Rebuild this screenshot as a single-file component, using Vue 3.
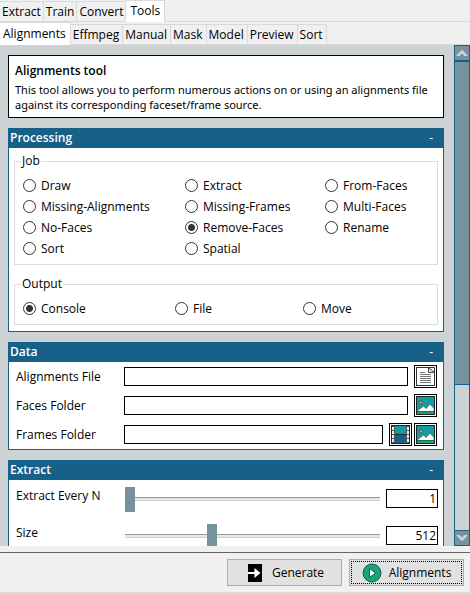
<script setup>
import { ref } from 'vue'

const mainTabs = ['Extract', 'Train', 'Convert', 'Tools']
const toolTabs = ['Alignments', 'Effmpeg', 'Manual', 'Mask', 'Model', 'Preview', 'Sort']
const activeMain = ref('Tools')
const activeTool = ref('Alignments')

const jobs = [
  'Draw', 'Extract', 'From-Faces',
  'Missing-Alignments', 'Missing-Frames', 'Multi-Faces',
  'No-Faces', 'Remove-Faces', 'Rename',
  'Sort', 'Spatial',
]
const outputs = ['Console', 'File', 'Move']
const job = ref('Remove-Faces')
const output = ref('Console')

const paths = ref([
  { id: 'alignments-file', label: 'Alignments File', value: '', pickers: ['file'] },
  { id: 'faces-folder', label: 'Faces Folder', value: '', pickers: ['picture'] },
  { id: 'frames-folder', label: 'Frames Folder', value: '', pickers: ['film', 'picture'] },
])

const sliders = ref([
  { id: 'extract-every-n', label: 'Extract Every N', value: 1, min: 1, max: 100 },
  { id: 'size', label: 'Size', value: 512, min: 256, max: 1024 },
])
</script>

<template>
  <div class="app">
    <nav class="tabs">
      <button
        v-for="tab in mainTabs"
        :key="tab"
        type="button"
        class="tab"
        :class="{ active: tab === activeMain }"
        @click="activeMain = tab"
      >{{ tab }}</button>
    </nav>
    <nav class="tabs tabs-tool">
      <button
        v-for="tab in toolTabs"
        :key="tab"
        type="button"
        class="tab"
        :class="{ active: tab === activeTool }"
        @click="activeTool = tab"
      >{{ tab }}</button>
    </nav>

    <div class="body">
      <main class="content">
        <section class="info">
          <h1>Alignments tool</h1>
          <p>This tool allows you to perform numerous actions on or using an alignments file against its corresponding faceset/frame source.</p>
        </section>

        <section class="panel">
          <header class="panel-head"><h2>Processing</h2><button type="button">-</button></header>
          <div class="groups">
            <fieldset>
              <legend>Job</legend>
              <div class="options job">
                <label v-for="name in jobs" :key="name">
                  <input v-model="job" type="radio" name="job" :value="name">{{ name }}
                </label>
              </div>
            </fieldset>
            <fieldset>
              <legend>Output</legend>
              <div class="options output">
                <label v-for="name in outputs" :key="name">
                  <input v-model="output" type="radio" name="output" :value="name">{{ name }}
                </label>
              </div>
            </fieldset>
          </div>
        </section>

        <section class="panel">
          <header class="panel-head"><h2>Data</h2><button type="button">-</button></header>
          <div class="paths">
            <div v-for="row in paths" :key="row.id" class="path-row">
              <label :for="row.id">{{ row.label }}</label>
              <input :id="row.id" v-model="row.value" type="text" class="box">
              <div class="pickers">
                <button v-for="kind in row.pickers" :key="kind" type="button" class="picker">
                  <svg v-if="kind === 'file'" viewBox="0 0 19 19" width="19" height="19">
                    <rect x="0.5" y="0.5" width="18" height="18" fill="#fff" stroke="#333" />
                    <path d="M12.500 0.500V5.500H18.500Z" fill="#ddd" />
                    <path d="M12.500 0.500V5.500H18.500M12.500 0.500L18.500 5.500" fill="none" stroke="#444" />
                    <path d="M13.500 0H19V4.500Z" fill="#fff" />
                    <path d="M13 0.500H18.500V5" fill="none" stroke="#333" />
                    <path d="M4 5.500H9M4 7.500H15M4 9.500H15M4 11.500H15M4 13.500H15M4 15.500H15" stroke="#777" />
                  </svg>
                  <svg v-else-if="kind === 'picture'" viewBox="0 0 19 19" width="19" height="19">
                    <rect x="0.5" y="0.5" width="18" height="18" fill="#119da4" stroke="#222" />
                    <circle cx="5" cy="6.500" r="1.600" fill="#f0a868" stroke="#54483c" stroke-width="0.900" />
                    <path d="M1 15L7.500 10L10 12.500L14 8L18 12.500V15.500H1Z" fill="#fff" stroke="#444" stroke-width="0.700" />
                    <rect x="1" y="15" width="17" height="3" fill="#13a377" />
                    <rect x="1" y="15" width="17" height="1" fill="#2b6656" />
                  </svg>
                  <svg v-else viewBox="0 0 19 19" width="19" height="19" shape-rendering="crispEdges">
                    <rect x="0" y="0" width="19" height="19" fill="#222" />
                    <path d="M1 1h3v17h-3zM15 1h3v17h-3z" fill="#555" />
                    <path d="M1 2h2v3h-2zM1 6h2v3h-2zM1 10h2v3h-2zM1 14h2v3h-2zM16 2h2v3h-2zM16 6h2v3h-2zM16 10h2v3h-2zM16 14h2v3h-2z" fill="#eee" />
                    <rect x="4" y="1" width="11" height="8" fill="#119da4" />
                    <rect x="4" y="10" width="11" height="8" fill="#176087" />
                  </svg>
                </button>
              </div>
            </div>
          </div>
        </section>

        <section class="panel">
          <header class="panel-head"><h2>Extract</h2><button type="button">-</button></header>
          <div class="sliders">
            <div v-for="row in sliders" :key="row.id" class="slider-row">
              <label :for="row.id">{{ row.label }}</label>
              <input :id="row.id" v-model.number="row.value" type="range" :min="row.min" :max="row.max">
              <input v-model.number="row.value" type="text" class="box number">
            </div>
          </div>
        </section>
      </main>

      <div class="scrollbar">
        <button type="button" class="arrow up">
          <svg viewBox="0 0 14 14" width="14" height="14"><path d="M1 10L6 4.500H8L13 10H9.500L7 7.500L4.500 10Z" fill="#cdd3d5" /></svg>
        </button>
        <div class="trough"><div class="thumb"></div></div>
        <button type="button" class="arrow down">
          <svg viewBox="0 0 14 14" width="14" height="14"><path d="M1 4L6 9.500H8L13 4H9.500L7 6.500L4.500 4Z" fill="#cdd3d5" /></svg>
        </button>
      </div>
    </div>

    <footer class="actions">
      <button type="button" class="action">
        <svg viewBox="0 0 20 20" width="20" height="20">
          <rect x="3" y="1" width="14" height="18" fill="#000" />
          <path d="M3 10H10" stroke="#fff" stroke-width="2" />
          <path d="M9.500 5L15.500 10L9.500 15Z" fill="#fff" />
        </svg>
        Generate
      </button>
      <button type="button" class="action focused">
        <svg viewBox="0 0 20 20" width="20" height="20">
          <circle cx="10" cy="10" r="9" fill="#0fa87c" stroke="#23584a" />
          <path d="M7.500 5.500L13.500 10L7.500 14.500Z" fill="#fff" stroke="#23584a" />
        </svg>
        Alignments
      </button>
    </footer>
  </div>
</template>

<style>
body {
  margin: 0;
  background: #f0f0f0;
}
</style>

<style scoped>
.app {
  display: flex;
  flex-direction: column;
  height: 100vh;
  overflow: hidden;
  background: #f0f0f0;
  color: #000;
  font: 12px/16px "Open Sans", "Noto Sans", sans-serif;
}
.app * {
  box-sizing: border-box;
}
button,
input {
  margin: 0;
  padding: 0;
  border: 0;
  border-radius: 0;
  background: none;
  color: inherit;
  font: inherit;
}
h1,
h2,
p {
  margin: 0;
  font-size: 12px;
}
h1,
h2 {
  font-weight: 600;
}
svg {
  display: block;
  flex: none;
}

.tabs {
  display: flex;
  align-items: flex-end;
  flex: none;
  height: 22px;
  border-bottom: 1px solid #d9d9d9;
}
.tabs-tool {
  height: 23px;
}
.tab {
  height: 20px;
  padding: 0 2px;
  border-top: 1px solid #d9d9d9;
  border-right: 1px solid #d9d9d9;
  white-space: nowrap;
}
.tabs-tool .tab {
  padding: 0 3px 0 2px;
}
.tab.active {
  height: 22px;
  margin-bottom: -1px;
  padding: 0 4px 1px;
  background: #fff;
}
.tabs-tool .tab.active {
  height: 23px;
  padding: 0 4px 1px 3px;
}

.body {
  display: flex;
  flex: 1;
  min-height: 0;
  background: #cdd3d5;
}
.content {
  flex: 1;
  min-width: 0;
  padding: 10px 10px 0 8px;
  overflow: hidden;
}
.info {
  min-height: 63px;
  padding: 6px 4px 5px 6px;
  border: 1px solid #000;
  background: #fff;
}
.info h1 {
  line-height: 18px;
}
.info p {
  padding-top: 2px;
  font-family: "Noto Sans", "Open Sans", sans-serif;
  font-size: 11px;
  line-height: 15px;
}

.panel {
  margin-top: 10px;
  border: 1px solid #176087;
  border-top: 0;
  background: #fff;
}
.panel-head {
  display: flex;
  align-items: center;
  justify-content: space-between;
  height: 20px;
  padding: 0 10px 0 1px;
  background: #176087;
  color: #fff;
}
.groups {
  display: grid;
  gap: 11px;
  padding: 5px 5px 6px;
}
fieldset {
  min-width: 0;
  margin: 0;
  padding: 6px 0 5px 8px;
  border: 1px solid #dcdcdc;
}
legend {
  margin-left: -2px;
  padding: 0 1px;
}
.options {
  display: grid;
  grid-auto-rows: 21px;
}
.options.job {
  grid-template-columns: 162fr 140fr 112fr;
}
.options.output {
  grid-template-columns: 152fr 128fr 134fr;
}
.options label {
  display: flex;
  align-items: center;
  gap: 5px;
  white-space: nowrap;
}
input[type="radio"] {
  appearance: none;
  flex: none;
  width: 13px;
  height: 13px;
  border: 1px solid #333;
  border-radius: 50%;
  background: #fff;
}
input[type="radio"]:checked {
  background: radial-gradient(circle, #333 3px, #fff 4px);
}

.box {
  min-width: 0;
  height: 19px;
  border: 1px solid #000;
  background: #fff;
}
.paths {
  display: grid;
  gap: 6px;
  padding: 3px 6px 3px 7px;
}
.path-row {
  display: flex;
  align-items: center;
}
.path-row label,
.slider-row label {
  flex: none;
  width: 108px;
}
.path-row .box {
  flex: 1;
}
.pickers {
  display: flex;
  gap: 2px;
  margin-left: 6px;
}
.picker {
  width: 23px;
  height: 23px;
  padding: 1px;
  border: 1px solid #000;
  background: #fff;
}

.sliders {
  display: grid;
  gap: 12px;
  padding: 6px 5px 12px 7px;
}
.slider-row {
  display: flex;
  align-items: center;
}
.slider-row label {
  height: 22px;
}
input[type="range"] {
  appearance: none;
  flex: 1;
  min-width: 0;
  height: 25px;
  margin: 0 6px 0 1px;
}
input[type="range"]::-webkit-slider-runnable-track {
  height: 4px;
  border-top: 1px solid #999;
  border-bottom: 1px solid #d0d0d0;
  background: #e7e7e7;
}
input[type="range"]::-webkit-slider-thumb {
  appearance: none;
  width: 10px;
  height: 25px;
  margin-top: -11px;
  background: #76929d;
}
.number {
  flex: none;
  width: 52px;
  padding-right: 1px;
  text-align: right;
}

.scrollbar {
  display: flex;
  flex-direction: column;
  flex: none;
  width: 16px;
}
.arrow {
  display: grid;
  place-items: center;
  flex: none;
  height: 16px;
  border: 1px solid #176087;
  background: #76929d;
}
.trough {
  flex: 1;
  border: solid #176087;
  border-width: 0 1px;
}
.thumb {
  height: 69%;
  border: solid #176087;
  border-width: 1px 0;
  background: #76929d;
}

.actions {
  display: flex;
  justify-content: flex-end;
  gap: 7px;
  flex: none;
  margin-top: 6px;
  padding: 6px 6px 6px 0;
  border-top: 1px solid #666;
  border-bottom: 2px solid #dcdcdc;
}
.action {
  display: flex;
  align-items: center;
  justify-content: center;
  gap: 7px;
  width: 115px;
  height: 27px;
  border: 1px solid #adadad;
  background: #e1e1e1;
}
.action.focused {
  outline: 1px dotted #000;
  outline-offset: -3px;
}
</style>
